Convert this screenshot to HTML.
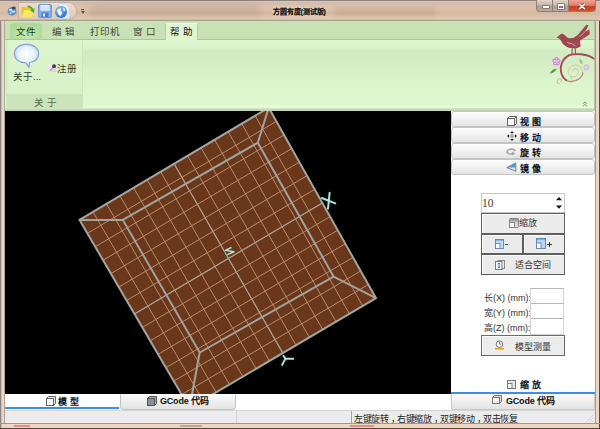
<!DOCTYPE html>
<html lang="zh-CN"><head><meta charset="utf-8">
<style>
*{margin:0;padding:0;box-sizing:border-box}
html,body{width:600px;height:429px;overflow:hidden;background:#eed6c0}
body{position:relative;font-family:"Liberation Sans",sans-serif;font-size:10px;color:#222}
.a{position:absolute}
.t{position:absolute;white-space:nowrap;line-height:1}
.tb{position:absolute;left:0;width:144px;height:16px;background:linear-gradient(#fdfdfd,#f1f1f1 50%,#e4e4e4);border:1px solid #c4c4c4;border-radius:3px}
.bt{position:absolute;background:#ebebeb;border:1px solid #5e5e5e;box-shadow:inset 1px 1px 0 #fbfbfb}
.ib{position:absolute;background:#fff;border:1px solid #d4d4d4;border-top-color:#b8b8b8}
.bl{font-size:9px;font-weight:bold;color:#111;letter-spacing:2.7px}
</style></head><body>
<!-- window frame -->
<div class="a" style="left:0;top:0;width:600px;height:429px;background:#eed6c0;overflow:hidden">
<div class="a" style="left:0;top:0;width:1px;height:429px;background:#8a8686"></div>
<div class="a" style="left:1px;top:0;width:1px;height:429px;background:#cac0b8"></div>
<div class="a" style="left:599px;top:0;width:1px;height:429px;background:#4e4844"></div>
<div class="a" style="left:0;top:428px;width:600px;height:1px;background:#4e4844"></div>
</div>
<!-- title bar -->
<div class="a" style="left:0;top:0;width:600px;height:21px;background:linear-gradient(#8c8480 0,#8c8480 1px,#d4c8c0 1px,#d2bcac 3px,#dcc2ac 6px,#dcc0aa 9px,#d2b6a0 13px,#dec4ae 17px,#e2cab4 19px,#aaa08e 20.5px)"></div>
<div class="a" style="left:90px;top:4px;width:170px;height:13px;background:rgba(120,105,95,.14);filter:blur(3px)"></div>
<!-- quick access pill -->
<div class="a" style="left:19px;top:2px;width:58px;height:18px;background:linear-gradient(#ecdcd0,#e0c9b8);border:1px solid #c8b0a0;border-left:none;border-radius:0 9px 9px 0"></div>
<!-- app icon -->
<svg class="a" style="left:7px;top:6px" width="10" height="10" viewBox="0 0 10 10"><circle cx="5" cy="5.3" r="4.3" fill="#5a8cc8"/><path d="M2 4q2-1 3 1t3 0" stroke="#dce8f4" stroke-width="1.4" fill="none"/><circle cx="3.5" cy="7" r="1.2" fill="#a8c8e8"/><path d="M4.5 0.8h4v2.4h-3z" fill="#444"/></svg>
<div class="a" style="left:18px;top:3px;width:1px;height:17px;background:#cfb8a8"></div>
<!-- folder icon -->
<svg class="a" style="left:21px;top:4px" width="14" height="14" viewBox="0 0 14 14"><path d="M0.5 3h4l1 1h6v9h-11z" fill="#e8c428"/><path d="M0.5 13l2.8-7h10.2l-2.8 7z" fill="#fbe66a"/><path d="M6.5 1.5q4 0 5.5 3.5l1.5-1-0.5 5-4-2.5 1.6-0.6q-1-2.6-4.1-2.4z" fill="#3aae3a"/></svg>
<!-- save icon -->
<svg class="a" style="left:38px;top:4px" width="14" height="14" viewBox="0 0 14 14"><rect x="0.5" y="0.5" width="13" height="13" rx="1.2" fill="#7eb2ee" stroke="#5a8cd0" stroke-width=".8"/><rect x="2.5" y="1" width="9" height="5.5" fill="#f2f8fe"/><path d="M3 3h8M3 4.8h8" stroke="#a8c8f0" stroke-width=".7"/><rect x="3.5" y="8.5" width="7" height="5" fill="#4a7cd0"/><rect x="5" y="9.5" width="2" height="3" fill="#e4eefa"/></svg>
<!-- globe icon -->
<svg class="a" style="left:54px;top:3px" width="16" height="16" viewBox="0 0 16 16"><defs><radialGradient id="gl" cx=".35" cy=".3" r=".8"><stop offset="0" stop-color="#8cc8ff"/><stop offset="1" stop-color="#1e6cc8"/></radialGradient></defs><path d="M5 0.5h7l3.5 3.5v11.5H5z" fill="#e2ecf8" stroke="#c4d2e4" stroke-width=".8"/><circle cx="7" cy="9" r="6" fill="url(#gl)"/><path d="M3.2 7.5q1.5-2.5 4-1.8l-1 2.2 2 1.5-1.5 3.5q-3-1-3.5-5.4zM8.5 4q2.5 1 3.2 3.5l-2 .5z" fill="#f4faff"/></svg>
<!-- dropdown -->
<div class="a" style="left:81px;top:9px;width:3px;height:1px;background:#555"></div>
<svg class="a" style="left:81px;top:11px" width="4" height="3" viewBox="0 0 4 3"><path d="M0 0h4l-2 3z" fill="#555"/></svg>
<!-- title -->
<div class="t" style="left:273px;top:8px;font-size:7px;font-weight:bold;color:#111;letter-spacing:-0.1px;text-shadow:0 0 3px #f8ece0,0 0 .4px #111">方圆有度(测试版)</div>
<!-- caption buttons -->
<div class="a" style="left:335px;top:7px;width:100px;height:9px;background:rgba(140,110,90,.16);filter:blur(2px)"></div>
<div class="a" style="left:536px;top:0;width:60px;height:12px;border:1px solid #8e7e76;border-top:none;border-radius:0 0 4px 4px;background:linear-gradient(#e2d4cc,#c8b6ac 45%,#b09e94 55%,#bcaaa0);overflow:hidden">
  <div class="a" style="left:15px;top:0;width:1px;height:12px;background:#8e7e76"></div>
  <div class="a" style="left:31px;top:0;width:28px;height:12px;background:linear-gradient(#eea898,#e07a62 45%,#c83c22 55%,#d4553a)"></div>
  <div class="a" style="left:31px;top:0;width:1px;height:12px;background:#8e7e76"></div>
</div>
<div class="a" style="left:543px;top:6px;width:6px;height:2px;background:#fff;box-shadow:0 0 0 .6px #6a5a52"></div>
<div class="a" style="left:558px;top:4px;width:6px;height:5px;border:1px solid #fff;border-top-width:2px;box-shadow:0 0 0 .6px #6a5a52,inset 0 0 0 .6px #6a5a52"></div>
<svg class="a" style="left:578px;top:3px" width="8" height="7" viewBox="0 0 8 7"><path d="M1 0.8l6 5.4M7 0.8l-6 5.4" stroke="#5a2a20" stroke-width="2.6"/><path d="M1 0.8l6 5.4M7 0.8l-6 5.4" stroke="#fff" stroke-width="1.6"/></svg>

<!-- ribbon -->
<div class="a" style="left:4px;top:21px;width:591px;height:19px;background:#c8e2b6"></div>
<div class="a" style="left:4px;top:39px;width:591px;height:1px;background:#abc69c"></div>
<div class="a" style="left:4px;top:40px;width:591px;height:69px;background:linear-gradient(#def6ce 0,#dcf4cc 7px,#d3ebc3 11px,#d5edc5 22px,#dcf4cc 40px,#def7ce 64px,#e6fbd8 67px,#e6fbd8 69px)"></div>
<div class="a" style="left:4px;top:108px;width:591px;height:3px;background:linear-gradient(#d0e6c0,#bcd0ac)"></div>
<div class="a" style="left:4px;top:21px;width:1px;height:90px;background:#a4b098"></div>
<div class="a" style="left:594px;top:21px;width:1px;height:90px;background:#b4c4a8"></div>
<!-- tabs -->
<div class="a" style="left:10px;top:23px;width:32px;height:16px;background:radial-gradient(ellipse 70% 80% at 50% 70%,#c4ecae,#aad893);border:1px solid #b6d8a2;border-bottom:none;border-radius:2px 2px 0 0"></div>
<div class="t" style="left:16px;top:27px;font-size:9.5px;color:#24381a">文件</div>
<div class="t" style="left:52px;top:27px;font-size:9.5px;color:#3e4638;letter-spacing:3px">编辑</div>
<div class="t" style="left:90px;top:27px;font-size:9.5px;color:#3e4638;letter-spacing:0.2px">打印机</div>
<div class="t" style="left:133px;top:27px;font-size:9.5px;color:#3e4638;letter-spacing:3px">窗口</div>
<div class="a" style="left:165px;top:23px;width:33px;height:17px;background:#dff7d0;border:1px solid #b4cfa6;border-top-color:#eef8e6;border-bottom:none;border-radius:2px 2px 0 0"></div>
<div class="t" style="left:170px;top:27px;font-size:9.5px;color:#111;letter-spacing:2.5px">帮助</div>
<!-- group -->
<div class="a" style="left:6px;top:40px;width:77px;height:68px;border:1px solid #cfe4c2;border-top:none;border-radius:0 0 3px 3px;background:linear-gradient(#dcf5cd,#d7f0c8)"></div>
<div class="a" style="left:7px;top:94px;width:75px;height:14px;background:#cae3ba"></div>
<div class="t" style="left:34px;top:98px;font-size:9.5px;color:#5a6650;letter-spacing:3px">关于</div>
<!-- bubble icon -->
<svg class="a" style="left:13px;top:43px" width="28" height="26" viewBox="0 0 28 26"><defs><radialGradient id="bg" cx=".5" cy=".45" r=".6"><stop offset="0" stop-color="#ffffff"/><stop offset=".55" stop-color="#e6f0fc"/><stop offset="1" stop-color="#a8c8f0"/></radialGradient></defs><path d="M13.5 1.2C6.5 1.2 1.4 5.2 1.4 10.8C1.4 15.8 5.5 19.4 12.6 19.8L16 24.2L16.6 19.5C22.2 18.6 25.7 15.2 25.7 10.8C25.7 5.2 20.5 1.2 13.5 1.2Z" fill="url(#bg)" stroke="#7a9ede" stroke-width="1.1"/><path d="M13.5 3.5v13" stroke="#fff" stroke-width="2" stroke-dasharray="1.2 1" opacity=".9"/></svg>
<div class="t" style="left:13px;top:72px;font-size:9.5px;color:#2e3a28">关于...</div>
<svg class="a" style="left:48px;top:64px" width="9" height="8" viewBox="0 0 9 8"><defs><linearGradient id="rg" x1="0" y1="0" x2="1" y2="1"><stop offset="0" stop-color="#f4f0f4"/><stop offset="1" stop-color="#d0ccd0"/></linearGradient></defs><rect x="0" y="0.5" width="8.5" height="7.5" fill="url(#rg)"/><path d="M2 6.5l4-3.5" stroke="#a8a8a8" stroke-width="1.2"/><circle cx="6" cy="2.2" r="1.9" fill="#3a3a3a"/></svg>
<div class="t" style="left:57px;top:64px;font-size:9.5px;color:#2e3a28">注册</div>
<!-- bird -->
<svg class="a" style="left:545px;top:20px" width="50" height="68" viewBox="545 20 50 68">
<path d="M556.7 37.4L559.3 35.2Q560.9 33.2 562.6 33.8L564.7 35.1Q566.5 37.6 568.8 38.3L573.5 38.1L577.7 35.1L586.6 24.4L588.4 25.6L585.6 31.3L589.4 29.6L589.8 34.2L580.2 40.6Q579.6 43.2 580.8 46Q578.2 48.6 575 48.4L568.5 47.8Q562.6 45.2 561.4 41.6L559.6 38.8Z" fill="#a04650"/>
<path d="M588.4 28.2L579.6 37M567 42.5q5 .5 8.5 3.5" stroke="#d8ccc0" stroke-width=".9" fill="none" opacity=".85"/>
<path d="M572.2 48.2l-0.3 6.2M575.2 48.2l0.3 5.6" stroke="#a04650" stroke-width="1.1"/>
<path d="M594 59Q591 55.5 581 54.2Q574 53.8 569.2 55.2Q562 59 560.7 67.5Q560.5 77 567 80.8" stroke="#a44a54" stroke-width="1.9" fill="none"/>
<path d="M567 80.8Q573.5 83 579.6 78.5Q583.5 74.5 582.7 72.3" stroke="#b88878" stroke-width="1.3" fill="none"/>
<path d="M582.7 72.3Q582 67 576.4 64.9Q570.2 65.3 568 71.2Q568.5 76.4 573 77Q578.5 76.4 578.5 71.2Q577 68 574.5 68.5Q572 70 573 72" stroke="#d0c8a4" stroke-width="1" fill="none"/>
<path d="M559.7 84Q556.5 83.5 557 80.5Q558.5 78 561 79Q562.5 81 560.5 82" stroke="#ccb090" stroke-width="1" fill="none"/>
<g transform="translate(556.5 61.2)" fill="#f4e8f6" stroke="#c880d8" stroke-width="1.1"><circle cx="0" cy="-2" r="1.6"/><circle cx="2" cy="-0.4" r="1.6"/><circle cx="1.2" cy="2" r="1.6"/><circle cx="-1.2" cy="2" r="1.6"/><circle cx="-2" cy="-0.4" r="1.6"/></g>
<circle cx="556.5" cy="61.2" r="1" fill="#e8d8ea"/>
<circle cx="586.4" cy="67.5" r="2.6" fill="#ddd0e6" stroke="#c0b0cc" stroke-width=".7"/>
<path d="M549.7 73.6Q551.5 69 557 68.4Q554.5 73 549.7 73.6z" fill="#5a9a4c"/>
<path d="M579.4 58.4Q583 60.5 582.3 64.6Q578.8 62.5 579.4 58.4z" fill="#94c480"/>
<path d="M570 77.2Q572 77.5 572.6 79.5Q570.6 79.2 570 77.2z" fill="#94c480"/>
</svg>
<svg class="a" style="left:582px;top:101px" width="6" height="6" viewBox="0 0 6 6"><path d="M1 2.8l2-2 2 2M1 5.3l2-2 2 2" stroke="#7a7a7a" stroke-width=".9" fill="none"/></svg>

<!-- 3D view -->
<div class="a" style="left:5px;top:111px;width:446px;height:283px;background:#000;overflow:hidden">
<div class="a" style="left:0;top:0"><svg width="446" height="283" viewBox="5 111 446 283" style="position:absolute;left:0;top:0">
<path d="M79.5 219.9L268.7 107.7L376.0 298.2L189.5 408.0Z" fill="#6a371a"/>
<path d="M93.0 211.9L202.8 400.2M87.4 233.3L276.4 121.3M106.5 203.9L216.1 392.3M95.2 246.8L284.0 134.9M120.0 195.9L229.5 384.5M103.1 260.2L291.7 148.5M133.6 187.8L242.8 376.6M110.9 273.6L299.4 162.1M147.1 179.8L256.1 368.8M118.8 287.1L307.0 175.7M160.6 171.8L269.4 360.9M126.6 300.5L314.7 189.3M174.1 163.8L282.8 353.1M134.5 313.9L322.4 202.9M187.6 155.8L296.1 345.3M142.4 327.4L330.0 216.6M201.1 147.8L309.4 337.4M150.2 340.8L337.7 230.2M214.6 139.8L322.7 329.6M158.1 354.3L345.3 243.8M228.2 131.7L336.0 321.7M165.9 367.7L353.0 257.4M241.7 123.7L349.4 313.9M173.8 381.1L360.7 271.0M255.2 115.7L362.7 306.0M181.6 394.6L368.3 284.6" stroke="#b68c70" stroke-width="1" fill="none"/>
<path d="M174.1 163.8L282.8 353.1M134.5 313.9L322.4 202.9" stroke="#a4a29c" stroke-width="1.15" fill="none"/>
<path d="M122.8 219.9L257.8 142.7L333.6 276.6L199.7 352.5ZM79.5 219.9L122.8 219.9M268.7 107.7L257.8 142.7M376.0 298.2L333.6 276.6M189.5 408.0L199.7 352.5" stroke="#a2a29e" stroke-width="2" fill="none"/>
<path d="M79.5 219.9L268.7 107.7L376.0 298.2L189.5 408.0Z" stroke="#a4a4a0" stroke-width="2" fill="none"/>
<path d="M321.8 198L335.3 203.4M329.6 192.8L328 208.7" stroke="#a8e6dc" stroke-width="2" stroke-linecap="round" fill="none"/>
<path d="M283.5 355.9L285.5 358.4L293.3 358.8M285.5 358.4L282.2 364.9" stroke="#a8e6dc" stroke-width="2" stroke-linecap="round" fill="none"/>
<path d="M231.5 247.4L225.5 250.4L233.9 251.8L227.3 254.6" stroke="#b8ece2" stroke-width="1.4" stroke-linejoin="round" fill="none"/>
</svg></div>
</div>

<!-- right panel -->
<div class="a" style="left:451px;top:111px;width:144px;height:299px;background:#fff"></div>
<div class="a" style="left:451px;top:111px;width:144px;height:65px">
  <div class="tb" style="top:0"></div><div class="tb" style="top:16px"></div><div class="tb" style="top:32px"></div><div class="tb" style="top:48px"></div>
</div>
<div class="t bl" style="left:520px;top:118px">视图</div>
<div class="t bl" style="left:520px;top:134px">移动</div>
<div class="t bl" style="left:520px;top:149px">旋转</div>
<div class="t bl" style="left:520px;top:165px">镜像</div>
<!-- tool icons -->
<svg class="a" style="left:507px;top:116px" width="10" height="10" viewBox="0 0 10 10"><rect x="0.5" y="2.5" width="7" height="7" fill="#fff" stroke="#666"/><path d="M0.5 2.5l2-2h7v7l-2 2M7.5 2.5l2-2" stroke="#666" fill="#e8e8e8"/><rect x="0.5" y="2.5" width="7" height="7" fill="#fafafa" stroke="#666"/></svg>
<svg class="a" style="left:507px;top:131px" width="10" height="10" viewBox="0 0 10 10"><path d="M5 1v8M1 5h8" stroke="#777" stroke-width=".8"/><path d="M5 0l-1.8 2h3.6zM5 10l-1.8-2h3.6zM0 5l2-1.8v3.6zM10 5l-2-1.8v3.6z" fill="#222"/></svg>
<svg class="a" style="left:506px;top:148px" width="11" height="8" viewBox="0 0 11 8"><path d="M9.5 3C8 0.5 3 0.5 1.2 3c-1 1.8 2 3.5 5.5 2.8" stroke="#a8a8a8" stroke-width="1.6" fill="none"/><path d="M6 3.5l3.5 2-3.5 2z" fill="#a8a8a8"/></svg>
<svg class="a" style="left:506px;top:162px" width="11" height="10" viewBox="0 0 11 10"><path d="M9.8 0.8L0.8 5.6 9.8 9.2z" fill="#dfe6ee" stroke="#6a7480" stroke-width=".9"/><path d="M9.8 0.6L0.8 5.6 9.8 5.6z" fill="#4e98dc"/></svg>

<!-- spinbox -->
<div class="ib" style="left:481px;top:193px;width:84px;height:20px;border-color:#c8c8c8"></div>
<div class="t" style="left:482px;top:198px;font-size:11.5px;color:#3a3a3a;font-family:'Liberation Serif',serif">10</div>
<svg class="a" style="left:556px;top:197px" width="6" height="12" viewBox="0 0 6 12"><path d="M0 3.2L3 0 6 3.2z" fill="#111"/><path d="M0 8.5L3 11.7 6 8.5z" fill="#111"/></svg>
<!-- buttons -->
<div class="bt" style="left:481px;top:213px;width:84px;height:21px"></div>
<svg class="a" style="left:509px;top:218px" width="10" height="10" viewBox="0 0 10 10"><defs><linearGradient id="g1" x1="0" y1="0" x2="0" y2="1"><stop offset="0" stop-color="#8c8c8c"/><stop offset=".5" stop-color="#cfcfcf"/><stop offset="1" stop-color="#e8e8e8"/></linearGradient></defs><rect x="0.5" y="0.5" width="9" height="9" rx="1" fill="url(#g1)" stroke="#858585"/><rect x="0.5" y="4.5" width="5" height="5" fill="#fafafa" stroke="#858585"/></svg>
<div class="t" style="left:519px;top:219px;font-size:9px;color:#333">缩放</div>
<div class="bt" style="left:481px;top:234px;width:42px;height:20px"></div>
<div class="bt" style="left:523px;top:234px;width:42px;height:20px"></div>
<svg class="a" style="left:495px;top:239px" width="9" height="10" viewBox="0 0 9 10"><rect x="0.5" y="0.5" width="8" height="9" fill="#c4e0f8" stroke="#6a8ab4"/><rect x="0.5" y="4.5" width="4.5" height="5" fill="#fff" stroke="#6a8ab4"/><path d="M1 1h7" stroke="#3a8ad8"/></svg>
<div class="a" style="left:505px;top:244px;width:3px;height:1px;background:#555"></div>
<svg class="a" style="left:536px;top:238px" width="10" height="11" viewBox="0 0 10 11"><rect x="0.5" y="0.5" width="9" height="10" fill="#b4d8f8" stroke="#6a8ab4"/><rect x="0.5" y="5" width="4.5" height="5.5" fill="#fff" stroke="#6a8ab4"/><path d="M1 1h8" stroke="#3a8ad8"/></svg>
<svg class="a" style="left:547px;top:242px" width="5" height="5" viewBox="0 0 5 5"><path d="M2.5 0v5M0 2.5h5" stroke="#333" stroke-width="1"/></svg>
<div class="bt" style="left:481px;top:254px;width:84px;height:21px"></div>
<svg class="a" style="left:495px;top:260px" width="10" height="10" viewBox="0 0 10 10"><rect x="3" y="0.5" width="6.5" height="8" fill="#eee" stroke="#888"/><rect x="0.5" y="1.5" width="6.5" height="8" fill="#fafafa" stroke="#777"/><path d="M4 3v5M2.8 4.2l1.2-1.2 1.2 1.2M2.8 6.8l1.2 1.2 1.2-1.2" stroke="#2a72c4" stroke-width=".9" fill="none"/></svg>
<div class="t" style="left:515px;top:261px;font-size:9px;color:#333">适合空间</div>
<!-- dims -->
<div class="t" style="left:484px;top:294px;font-size:9px;color:#333;letter-spacing:0px">长(X) (mm):</div>
<div class="t" style="left:484px;top:309px;font-size:9px;color:#333;letter-spacing:0px">宽(Y) (mm):</div>
<div class="t" style="left:484px;top:324px;font-size:9px;color:#333;letter-spacing:0px">高(Z) (mm):</div>
<div class="ib" style="left:530px;top:288px;width:34px;height:16px"></div>
<div class="ib" style="left:530px;top:303px;width:34px;height:16px"></div>
<div class="ib" style="left:530px;top:318px;width:34px;height:17px"></div>
<div class="a" style="left:481px;top:335px;width:84px;height:21px;background:#ececec;border:1px solid #6a6a6a;box-shadow:inset 1px 1px 0 #fafafa"></div>
<svg class="a" style="left:495px;top:340px" width="9" height="10" viewBox="0 0 9 10"><circle cx="4.5" cy="4.2" r="3.3" fill="#fafafa" stroke="#666" stroke-width=".9"/><path d="M4.5 2v2.2h1.8" stroke="#666" stroke-width=".8" fill="none"/><rect x="0" y="8" width="9" height="1.6" fill="#e2a810"/></svg>
<div class="t" style="left:515px;top:343px;font-size:9px;color:#333">模型测量</div>
<!-- right bottom tabs -->
<svg class="a" style="left:507px;top:380px" width="9" height="9" viewBox="0 0 9 9"><rect x="0.5" y="0.5" width="8" height="8" fill="#e8e8e8" stroke="#7a7a7a"/><rect x="0.5" y="3.5" width="4.5" height="5" fill="#fafafa" stroke="#7a7a7a"/></svg>
<div class="t bl" style="left:520px;top:381px">缩放</div>
<div class="a" style="left:451px;top:392px;width:144px;height:2px;background:#3a8ee6"></div>
<div class="a" style="left:451px;top:394px;width:144px;height:16px;background:linear-gradient(#fbfbfb,#ececec 60%,#e2e2e2);border:1px solid #c8c8c8;border-top:none;border-radius:0 0 2px 2px"></div>
<svg class="a" style="left:492px;top:395px" width="10" height="9" viewBox="0 0 10 9"><path d="M0.5 2.5l2-2h7v6l-2 2" stroke="#777" fill="#d8d8d8"/><rect x="0.5" y="2.5" width="7" height="6" fill="#f4f4f4" stroke="#777"/></svg>
<div class="t" style="left:506px;top:397px;font-size:9px;font-weight:bold;color:#111;letter-spacing:-0.2px">GCode 代码</div>

<!-- left bottom tabs -->
<div class="a" style="left:5px;top:394px;width:446px;height:16px;background:#fff"></div>
<div class="a" style="left:5px;top:407px;width:114px;height:2px;background:#3a8ee6"></div>
<div class="a" style="left:120px;top:394px;width:116px;height:16px;background:linear-gradient(#fbfbfb,#ececec 60%,#e2e2e2);border:1px solid #c4c4c4;border-top:none;border-radius:0 0 4px 4px"></div>
<svg class="a" style="left:46px;top:396px" width="10" height="10" viewBox="0 0 10 10"><path d="M0.5 2.5l2-2h7v7l-2 2" stroke="#666" fill="#e8e8e8"/><rect x="0.5" y="2.5" width="7" height="7" fill="#fafafa" stroke="#666"/></svg>
<div class="t bl" style="left:58px;top:398px;letter-spacing:2.5px">模型</div>
<svg class="a" style="left:147px;top:396px" width="10" height="10" viewBox="0 0 10 10"><path d="M0.5 2.5l2-2h7v7l-2 2" stroke="#555" fill="#a8acb2"/><rect x="0.5" y="2.5" width="7" height="7" fill="#8a9098" stroke="#555"/></svg>
<div class="t" style="left:160px;top:397px;font-size:9px;font-weight:bold;color:#111;letter-spacing:-0.2px">GCode 代码</div>

<!-- status bar -->
<div class="a" style="left:5px;top:410px;width:590px;height:14px;background:#ececec;border-top:1px solid #d4d4d4"></div>
<div class="a" style="left:236px;top:411px;width:1px;height:13px;background:#d0d0d0"></div>
<div class="a" style="left:351px;top:411px;width:1px;height:13px;background:#a0a0a0"></div>
<div class="t" style="left:354px;top:415px;font-size:9px;color:#222;letter-spacing:-0.4px">左键旋转<span style="position:relative;left:3px">，</span>右键缩放<span style="position:relative;left:3px">，</span>双键移动<span style="position:relative;left:3px">，</span>双击恢复</div>
<svg class="a" style="left:584px;top:413px" width="10" height="10" viewBox="0 0 10 10"><path d="M9 2L2 9M9 5L5 9M9 8L8 9" stroke="#c4c4c4" stroke-width="1" stroke-dasharray="1 1"/></svg>
<!-- borders -->
<div class="a" style="left:0;top:423px;width:600px;height:1px;background:#a89484"></div>
<div class="a" style="left:350px;top:425px;width:24px;height:2px;background:#d06060;opacity:.6"></div>
<div class="a" style="left:14px;top:425px;width:16px;height:2px;background:#d06060;opacity:.6"></div>
<div class="a" style="left:180px;top:425px;width:22px;height:2px;background:#8a7a70;opacity:.5"></div>
<div class="a" style="left:4px;top:111px;width:1px;height:312px;background:#b4a090"></div>
<div class="a" style="left:595px;top:21px;width:1px;height:402px;background:#a49a92"></div>
</body></html>
